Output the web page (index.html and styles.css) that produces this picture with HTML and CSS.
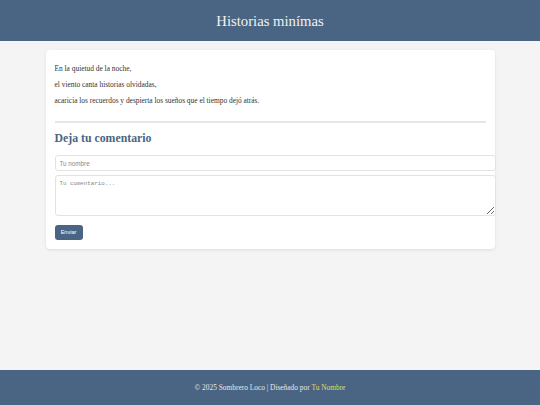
FILE: index.html
```html
<!DOCTYPE html>
<html lang="es">
<head>
<meta charset="utf-8">
<title>Historias minímas</title>
<link rel="stylesheet" href="styles.css">
</head>
<body>
<header class="site-header">
  <h1 class="site-title">Historias minímas</h1>
</header>
<main class="content">
  <article class="card">
    <p class="verse first">En la quietud de la noche,</p>
    <p class="verse">el viento canta historias olvidadas,</p>
    <p class="verse">acaricia los recuerdos y despierta los sueños que el tiempo dejó atrás.</p>
    <hr class="divider">
    <h2 class="comment-title">Deja tu comentario</h2>
    <form class="comment-form">
      <input class="field" type="text" placeholder="Tu nombre">
      <textarea class="field area" placeholder="Tu comentario..."></textarea>
      <div><button class="send" type="button">Enviar</button></div>
    </form>
  </article>
</main>
<footer class="site-footer">
  <p class="footer-text">© 2025 Sombrero Loco | Diseñado por <span class="author">Tu Nombre</span></p>
</footer>
</body>
</html>
```
FILE: styles.css
```css
html, body { height: 100%; }
body {
  margin: 0;
  background: #f4f4f4;
  font-family: "Liberation Serif", Georgia, serif;
  color: #333;
  display: flex;
  flex-direction: column;
  min-height: 100vh;
}
.site-header {
  background: #4a6583;
  height: 41px;
  display: flex;
  align-items: center;
  justify-content: center;
}
.site-title {
  margin: 0;
  font-weight: normal;
  font-size: 14.7px;
  color: #f2f2f2;
  line-height: 16px;
}
.content {
  flex: 1;
  padding-top: 9px;
}
.card {
  width: 449px;
  box-sizing: border-box;
  margin: 0 auto;
  background: #fff;
  border-radius: 4px;
  box-shadow: 0 1px 3px rgba(0,0,0,0.1);
  padding: 9px;
}
.verse {
  margin: 0 0 6px;
  font-size: 7.4px;
  line-height: 10px;
  color: #333;
}
.verse.first { margin-top: 5px; }
.divider {
  border: 0;
  height: 2px;
  background: #e6e6e6;
  margin: 15px 0 8px;
}
.comment-title {
  margin: 0 0 10px;
  font-size: 11.8px;
  line-height: 14px;
  color: #4a6583;
  font-weight: bold;
}
.comment-form {
  display: flex;
  flex-direction: column;
  gap: 4px;
}
.field {
  display: block;
  width: 100%;
  box-sizing: content-box;
  padding: 4px;
  border: 1px solid #e3e3e3;
  border-radius: 3px;
  font-family: "Liberation Sans", Arial, sans-serif;
  font-size: 6.3px;
  height: 6px;
  margin: 0;
  color: #333;
}
.field::placeholder { color: #888; }
.area {
  font-family: "Liberation Mono", monospace;
  font-size: 5.8px;
  height: 31px;
}
.send {
  margin-top: 2px;
  background: #4a6583;
  color: #fff;
  border: 0;
  border-radius: 3px;
  width: 28px;
  height: 15px;
  padding: 0;
  font-family: "Liberation Sans", Arial, sans-serif;
  font-size: 5.5px;
}
.site-footer {
  background: #4a6583;
  height: 35px;
  display: flex;
  align-items: center;
  justify-content: center;
}
.footer-text {
  margin: 0;
  color: #e8e8e8;
  font-size: 7.4px;
}
.author { color: #e3d86a; }
```
